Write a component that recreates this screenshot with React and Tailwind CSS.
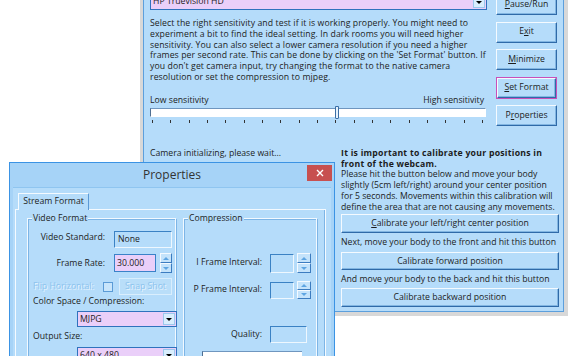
import React from "react";

function Tri({ color = "border-t-black" }) {
  return (
    <div
      className={`w-0 h-0 border-l-[3px] border-r-[3px] border-t-[3px] border-l-transparent border-r-transparent ${color}`}
    />
  );
}

function TriUp() {
  return (
    <div className="w-0 h-0 border-l-[3px] border-r-[3px] border-b-[3px] border-l-transparent border-r-transparent border-b-[#5ea5e2]" />
  );
}

function TriDown() {
  return (
    <div className="w-0 h-0 border-l-[3px] border-r-[3px] border-t-[3px] border-l-transparent border-r-transparent border-t-[#5ea5e2]" />
  );
}

function Combo({ text, className }) {
  return (
    <div className={`flex items-stretch border border-[#2f72bd] bg-[#eacff9] ${className}`}>
      <span className="flex-1 pl-[2px] flex items-center whitespace-nowrap overflow-hidden">{text}</span>
      <div className="w-[12px] m-[1px] bg-[#d9eefd] border border-[#9cc8ee] flex items-center justify-center">
        <Tri />
      </div>
    </div>
  );
}

function Btn({ children, className }) {
  return (
    <div
      className={`flex items-center justify-center whitespace-nowrap bg-[#b5dcfa] border border-t-[#f4faff] border-l-[#f4faff] border-b-[#2f6aa8] border-r-[#2f6aa8] shadow-[inset_-1px_-1px_0_#82b6e2] ${className}`}
    >
      {children}
    </div>
  );
}

function Sunken({ children, className }) {
  return (
    <div
      className={`flex items-center pl-[3px] border border-t-[#3b82c4] border-l-[#3b82c4] border-b-[#eef7fe] border-r-[#eef7fe] ${className}`}
    >
      {children}
    </div>
  );
}

function Spin({ className }) {
  return (
    <div className={`flex flex-col ${className}`}>
      <div className="flex-1 flex items-center justify-center bg-[#c4e3fb] border border-t-[#f4faff] border-l-[#f4faff] border-b-[#3c7cc0] border-r-[#3c7cc0]">
        <TriUp />
      </div>
      <div className="flex-1 flex items-center justify-center bg-[#c4e3fb] border border-t-[#f4faff] border-l-[#f4faff] border-b-[#3c7cc0] border-r-[#3c7cc0]">
        <TriDown />
      </div>
    </div>
  );
}

function Group({ label, className, children }) {
  return (
    <div
      className={`relative border border-[#f2f9ff] shadow-[inset_1px_1px_0_#7db5e6,1px_1px_0_#7db5e6] ${className}`}
    >
      <span className="absolute -top-[6px] left-[4px] px-[1px] bg-[#b5dcfa] leading-[10.7px]">{label}</span>
      {children}
    </div>
  );
}

export default function App() {
  const ticks = Array.from({ length: 19 });
  return (
    <div className="relative w-[576px] h-[356px] overflow-hidden bg-white text-[#1c1c1c] text-[8.7px] font-['Open_Sans',sans-serif]">
      {/* Main window */}
      <div className="absolute left-[140px] top-[-14px] w-[428px] bg-[#d8d8d8] pl-[3px] pr-[4px] pb-[4px]">
        <div className="bg-[#b5dcfa] border-l border-r border-b border-[#5c9fdc] pl-[6px] pr-[6px] pt-[8px] pb-[4px]">
          {/* top row */}
          <div className="flex items-start">
            <div className="w-[337px]">
              <Combo text="HP Truevision HD" className="h-[16px]" />
              <p className="mt-[8px] leading-[10.8px] whitespace-nowrap tracking-[0.08px]">
                Select the right sensitivity and test if it is working properly. You might need to
                <br />
                experiment a bit to find the ideal setting. In dark rooms you will need higher
                <br />
                sensitivity. You can also select a lower camera resolution if you need a higher
                <br />
                frames per second rate. This can be done by clicking on the 'Set Format' button. If
                <br />
                you don't get camera input, try changing the format to the native camera
                <br />
                resolution or set the compression to mjpeg.
              </p>
              <div className="mt-[12px] flex justify-between leading-[10.8px] w-[336px]">
                <span>Low sensitivity</span>
                <span className="mr-[2px]">High sensitivity</span>
              </div>
              <div className="relative mt-[2.4px] w-[336px] h-[9px] bg-white border-t border-l border-t-[#6f96bf] border-l-[#4f6f92] border-b border-r border-b-[#ffffff] border-r-[#ffffff]">
                <div className="absolute left-[184px] top-[-3px] w-[4px] h-[13px] bg-[#e6f3fe] border border-[#3b6fa6] rounded-b-[1px]" />
              </div>
              <div className="ml-[2px] w-[331px] mt-[3px] flex justify-between">
                {ticks.map((_, i) => (
                  <div key={i} className="w-px h-[3px] bg-[#333333]" />
                ))}
              </div>
            </div>
            <div className="ml-[9px] w-[61px] flex flex-col gap-[6.5px]">
              <Btn className="h-[21px]">
                <span><u>P</u>ause/Run</span>
              </Btn>
              <Btn className="h-[21px]">
                <span>E<u>x</u>it</span>
              </Btn>
              <Btn className="h-[21px]">
                <span><u>M</u>inimize</span>
              </Btn>
              <div className="h-[22px] border border-[#c94fb8] flex">
                <Btn className="flex-1">
                  <span><u>S</u>et Format</span>
                </Btn>
              </div>
              <Btn className="h-[21px]">
                <span>P<u>r</u>operties</span>
              </Btn>
            </div>
          </div>
          {/* bottom row */}
          <div className="mt-[22px] flex">
            <div className="w-[191px] leading-[10.7px] whitespace-nowrap">Camera initializing, please wait...</div>
            <div className="w-[218px] -mr-[2px] leading-[10.7px] whitespace-nowrap">
              <div className="font-bold tracking-[0.25px]">
                It is important to calibrate your positions in
                <br />
                front of the webcam.
              </div>
              <div>
                Please hit the button below and move your body
                <br />
                slightly (5cm left/right) around your center position
                <br />
                for 5 seconds. Movements within this calibration will
                <br />
                define the area that are not causing any movements.
              </div>
              <Btn className="mt-[2px] h-[19px]">
                <span><u>C</u>alibrate your left/right center position</span>
              </Btn>
              <div className="mt-[4px]">Next, move your body to the front and hit this button</div>
              <Btn className="mt-[4px] h-[18px]">
                <span>Calibrate forward position</span>
              </Btn>
              <div className="mt-[4px]">And move your body to the back and hit this button</div>
              <Btn className="mt-[3.5px] h-[19px]">
                <span>Calibrate backward position</span>
              </Btn>
            </div>
          </div>
        </div>
      </div>

      {/* Properties dialog */}
      <div className="absolute left-[9px] top-[162px] w-[326px] h-[220px] overflow-hidden border border-[#3b93e4] bg-[#a6d3f7]">
        <div className="relative h-[24px] flex items-center justify-center text-[12px] text-[#333333]">
          Properties
          <div className="absolute right-[2px] top-[2px] w-[25px] h-[16px] bg-[#c75050] flex items-center justify-center">
            <svg width="8" height="8" viewBox="0 0 8 8">
              <path d="M1 1L7 7M7 1L1 7" stroke="white" strokeWidth="1.4" />
            </svg>
          </div>
        </div>
        <div className="mx-[3px] h-[200px] bg-[#b5dcfa] border-t border-[#8fc5f0] pt-[5px]">
          <div className="ml-[5px] w-[71px] h-[17px] flex items-center justify-center bg-[#b5dcfa] border-t border-l border-r border-t-[#f4faff] border-l-[#f4faff] border-r-[#5c9ad6] relative z-10 -mb-px">
            Stream Format
          </div>
          <div className="ml-[2px] w-[311px] h-[200px] border border-[#f4faff] shadow-[inset_-1px_0_0_#7db5e6] flex pl-[11px] pr-[8px] pt-[8px]">
            {/* Video Format */}
            <Group label="Video Format" className="w-[149px] h-[180px] pl-[5px]">
              <div className="pt-[12px] flex items-center">
                <span className="w-[72px] text-right mb-[4px] whitespace-nowrap">Video Standard:</span>
                <Sunken className="ml-[9px] w-[58px] h-[17px]">None</Sunken>
              </div>
              <div className="mt-[5px] flex items-center">
                <span className="w-[72px] text-right whitespace-nowrap">Frame Rate:</span>
                <div className="ml-[9px] w-[42px] h-[18px] bg-[#eacff9] border border-[#3a82c8] flex items-center pl-[2px]">
                  30.000
                </div>
                <Spin className="ml-[4px] w-[12px] h-[20px]" />
              </div>
              <div className="mt-[5px] flex items-center">
                <span className="w-[70px] whitespace-nowrap text-[#8cc3ee] [text-shadow:1px_1px_0_#e6f4ff]">Flip Horizontal:</span>
                <div className="w-[10px] h-[10px] border border-[#5b9bd6] bg-[#c8e5fb]" />
                <div className="ml-[6px] w-[53px] h-[17px] flex items-center justify-center border border-[#d9eefd] bg-[#b9def9] text-[#8cc3ee] [text-shadow:1px_1px_0_#e6f4ff]">
                  Snap Shot
                </div>
              </div>
              <div className="mt-[1px] leading-[10.7px] whitespace-nowrap">Color Space / Compression:</div>
              <Combo text="MJPG" className="mt-[4.7px] ml-[44px] w-[100px] h-[16px]" />
              <div className="mt-[3.6px] leading-[10.7px]">Output Size:</div>
              <Combo text="640 x 480" className="mt-[5.6px] ml-[44px] w-[100px] h-[16px]" />
            </Group>
            {/* Compression */}
            <Group label="Compression" className="ml-[7px] w-[134px] h-[180px]">
              <div className="pt-[34px] flex items-center">
                <span className="w-[78px] text-right whitespace-nowrap">I Frame Interval:</span>
                <Sunken className="ml-[8px] w-[24px] h-[19px]" />
                <Spin className="ml-[3px] w-[14px] h-[20px]" />
              </div>
              <div className="mt-[8px] flex items-center">
                <span className="w-[78px] text-right whitespace-nowrap">P Frame Interval:</span>
                <Sunken className="ml-[8px] w-[24px] h-[17px]" />
                <Spin className="ml-[3px] w-[14px] h-[18px]" />
              </div>
              <div className="mt-[27px] flex items-center">
                <span className="w-[78px] text-right whitespace-nowrap">Quality:</span>
                <Sunken className="ml-[8px] w-[37px] h-[17px]" />
              </div>
              <div className="mt-[8px] ml-[18px] w-[100px] h-[8px] bg-white border-t border-l border-t-[#6f96bf] border-l-[#4f6f92]" />
            </Group>
          </div>
        </div>
      </div>
    </div>
  );
}
